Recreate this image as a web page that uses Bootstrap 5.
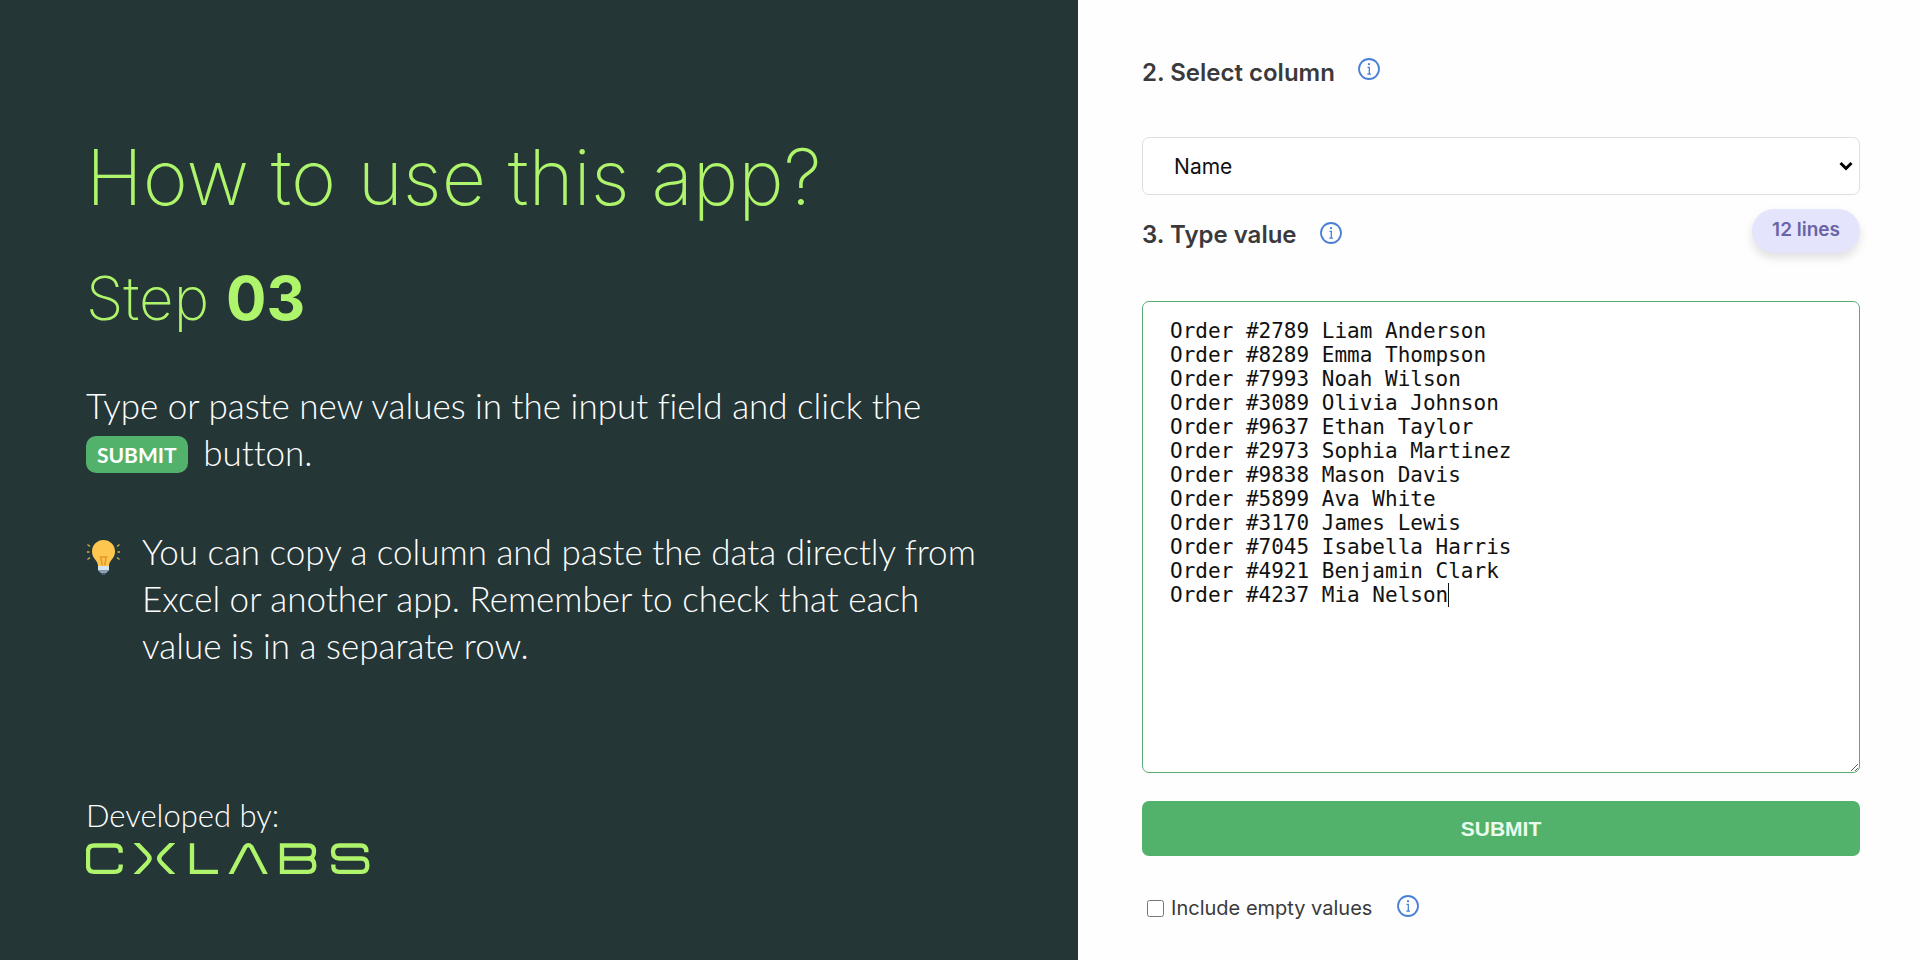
<!DOCTYPE html>
<html lang="en">
<head>
<meta charset="utf-8">
<meta name="viewport" content="width=device-width, initial-scale=1">
<title>How to use this app? – Step 03</title>
<link href="https://cdn.jsdelivr.net/npm/bootstrap@5.3.0/dist/css/bootstrap.min.css" rel="stylesheet">
<style>
  :root { --lime: #aff56c; --leaf: #52b26b; --pine: #253637; --ink: #3a3a3c; }
  body { font-family: Inter, "Liberation Sans", sans-serif; background: #fefefe; color: var(--ink); }
  .intro { flex: 0 0 56.15%; background: var(--pine); color: #fff; padding: 130px 84px 86px 86px;
           font-family: Lato, "Liberation Sans", sans-serif; font-weight: 300; font-size: 35px; line-height: 47px;
           font-variant-ligatures: none; }
  .intro h1, .intro h2 { font-family: Inter, "Liberation Sans", sans-serif; font-weight: 200; color: var(--lime); }
  .intro h1 { font-size: 77px; line-height: 94px; margin-bottom: 38px; }
  .intro h2 { font-size: 60px; line-height: 72px; margin-bottom: 48px; }
  .intro h2 strong { font-weight: 700; }
  .key-label { background: var(--leaf); font-size: 21px; font-weight: 700; line-height: 37px; padding: 0 11px;
               border-radius: 10px; margin-right: 6px; }
  .lead-in { margin-bottom: 52px; }
  .tip { gap: 21px; }
  .tip svg { margin-top: 11px; }
  .by-line { font-size: 31px; line-height: 38px; margin-bottom: 9px; }
  .tool { padding: 55px 60px 32px 64px; }
  .tool-title { font-size: 24px; font-weight: 600; line-height: 36px; }
  .info { color: #4a7fd6; line-height: 0; margin-left: 22px; }
  .field { border-radius: 7px; border-color: #dfdfdf; color: #111; }
  .pick { height: 58px; margin-top: 46px; margin-bottom: 14px; padding: 8px 30px 6px 31px; font-size: 21px; background-color: #fff;
          background-image: url("data:image/svg+xml,%3Csvg xmlns='http://www.w3.org/2000/svg' viewBox='0 0 14 10'%3E%3Cpath d='M1.5 2 7 7.5 12.500 2' fill='none' stroke='%23000' stroke-width='3'/%3E%3C/svg%3E");
          background-size: 14px 10px; background-position: right 6px center; }
  .count { background: #e5e4fd; color: #6a64a6; font-size: 19px; font-weight: 600; line-height: 24px; padding: 9px 20px 11px;
           box-shadow: 0 5px 10px rgba(0,0,0,.12); }
  .values { height: 472px; padding: 17px 27px; border-color: #5cab75; resize: vertical; overflow: hidden; }
  .values, .text-cursor { font-family: "DejaVu Sans Mono", monospace; font-size: 21px; line-height: 24px; }
  .values:focus, .pick:focus { box-shadow: none; }
  /* cursor after the 22nd character of the 12th line */
  .text-cursor { left: calc(28px + 22ch); top: calc(18px + 24px * 11); width: 1px; height: 24px; background: #111; }
  .send { background: var(--leaf); color: #eafbee; font-family: "Liberation Sans", sans-serif; font-size: 21px; font-weight: 700;
          height: 55px; border: 0; border-radius: 7px; margin-top: 28px; }
  .send:hover { background: #479e5e; color: #fff; }
  .option { margin-top: 37px; font-size: 20px; line-height: 30px; }
  .option input { width: 17px; height: 17px; margin: 0 7px 0 5px; }
  .option .info { margin-left: 24px; }
</style>
</head>
<body>
<svg class="d-none" aria-hidden="true">
  <symbol id="info" viewBox="0 0 24 24">
    <circle cx="12" cy="12" r="10" fill="none" stroke="currentColor" stroke-width="1.8"/>
    <path d="M10.500 10.300h1.800V17M10.300 17.200h3.700" fill="none" stroke="currentColor" stroke-width="1.300"/>
    <circle cx="12" cy="7.200" r="1.100" fill="currentColor"/>
  </symbol>
</svg>
<div class="d-flex min-vh-100">
  <section class="intro d-flex flex-column">
    <h1>How to use this app?</h1>
    <h2>Step <strong>03</strong></h2>
    <p class="lead-in">Type or paste new values in the input field and click the <span class="key-label d-inline-block align-text-bottom">SUBMIT</span> button.</p>
    <div class="tip d-flex align-items-start">
      <svg class="flex-shrink-0" width="35" height="37" viewBox="0 0 35 37" aria-hidden="true">
        <path d="M12 27C12 21 6 20 6 12.500a11.500 11.500 0 0 1 23 0C29 20 23 21 23 27z" fill="#fdc64e"/>
        <path d="M13.500 18h8M15 18.500l1.200 8M20 18.500l-1.200 8" fill="none" stroke="#e9952c" stroke-width="1.600"/>
        <path d="M12 27h11v4.500H12z" fill="#d5e2ef"/>
        <path d="M12.500 31.500h10l-2 2.500h-6z" fill="#8da2b8"/><path d="M15 34h5l-1 2h-3z" fill="#49617c"/>
        <path d="M1.500 5.500l2.500 2M1 13h2.500M1.500 20.500l2.500-2M33.500 5.500l-2.500 2M34 13h-2.500M33.500 20.500l-2.500-2" fill="none" stroke="#d3ab4c" stroke-width="1.300"/>
      </svg>
      <p class="mb-0">You can copy a column and paste the data directly from Excel or another app. Remember to check that each value is in a separate row.</p>
    </div>
    <footer class="mt-auto">
      <p class="by-line">Developed by:</p>
      <svg class="d-block" width="284" height="31" viewBox="78 190 852 92" role="img" aria-label="CXLABS" fill="none" stroke="#aff56c" stroke-width="13">
        <path d="M182 219V214Q182 197 164 197H102Q84 197 84 215V257Q84 276 102 276H164Q182 276 182 260V254"/>
        <path d="M226 186L262 223Q275 236 262 249L226 286M341 186L304 223Q291 236 304 249L341 286"/>
        <path d="M396 190V276H474M511 286L556 201Q565 191 574 201L618 286"/>
        <path d="M666 197H744Q762 197 762 214Q762 236 744 236H666M744 236Q763 236 763 257Q763 276 744 276H666V190"/>
        <path d="M919 217V214Q919 197 902 197H838Q819 197 819 216Q819 236 838 236H904Q922 236 922 256Q922 276 904 276H838Q820 276 820 260V254"/>
      </svg>
    </footer>
  </section>

  <form class="tool flex-grow-1">
    <div class="d-flex align-items-start">
      <label class="tool-title" for="column">2. Select column</label>
      <a class="info" href="#" aria-label="About the column"><svg width="24" height="28"><use href="#info" width="24" height="24" y="2"/></svg></a>
    </div>
    <select class="form-select field pick" id="column"><option>Name</option></select>

    <div class="d-flex align-items-end">
      <label class="tool-title" for="values">3. Type value</label>
      <a class="info mb-2" href="#" aria-label="About the values"><svg width="24" height="24"><use href="#info"/></svg></a>
      <span class="count rounded-pill ms-auto">12 lines</span>
    </div>
    <div class="position-relative mt-5">
      <textarea class="form-control field values" id="values" spellcheck="false">Order #2789 Liam Anderson
Order #8289 Emma Thompson
Order #7993 Noah Wilson
Order #3089 Olivia Johnson
Order #9637 Ethan Taylor
Order #2973 Sophia Martinez
Order #9838 Mason Davis
Order #5899 Ava White
Order #3170 James Lewis
Order #7045 Isabella Harris
Order #4921 Benjamin Clark
Order #4237 Mia Nelson</textarea>
      <span class="text-cursor position-absolute"></span>
    </div>
    <button class="btn send w-100" type="button">SUBMIT</button>
    <div class="option d-flex align-items-center">
      <input type="checkbox" id="empty"><label for="empty">Include empty values</label>
      <a class="info mb-1" href="#" aria-label="About empty values"><svg width="24" height="24"><use href="#info"/></svg></a>
    </div>
  </form>
</div>
<script src="https://cdn.jsdelivr.net/npm/bootstrap@5.3.0/dist/js/bootstrap.bundle.min.js"></script>
</body>
</html>
